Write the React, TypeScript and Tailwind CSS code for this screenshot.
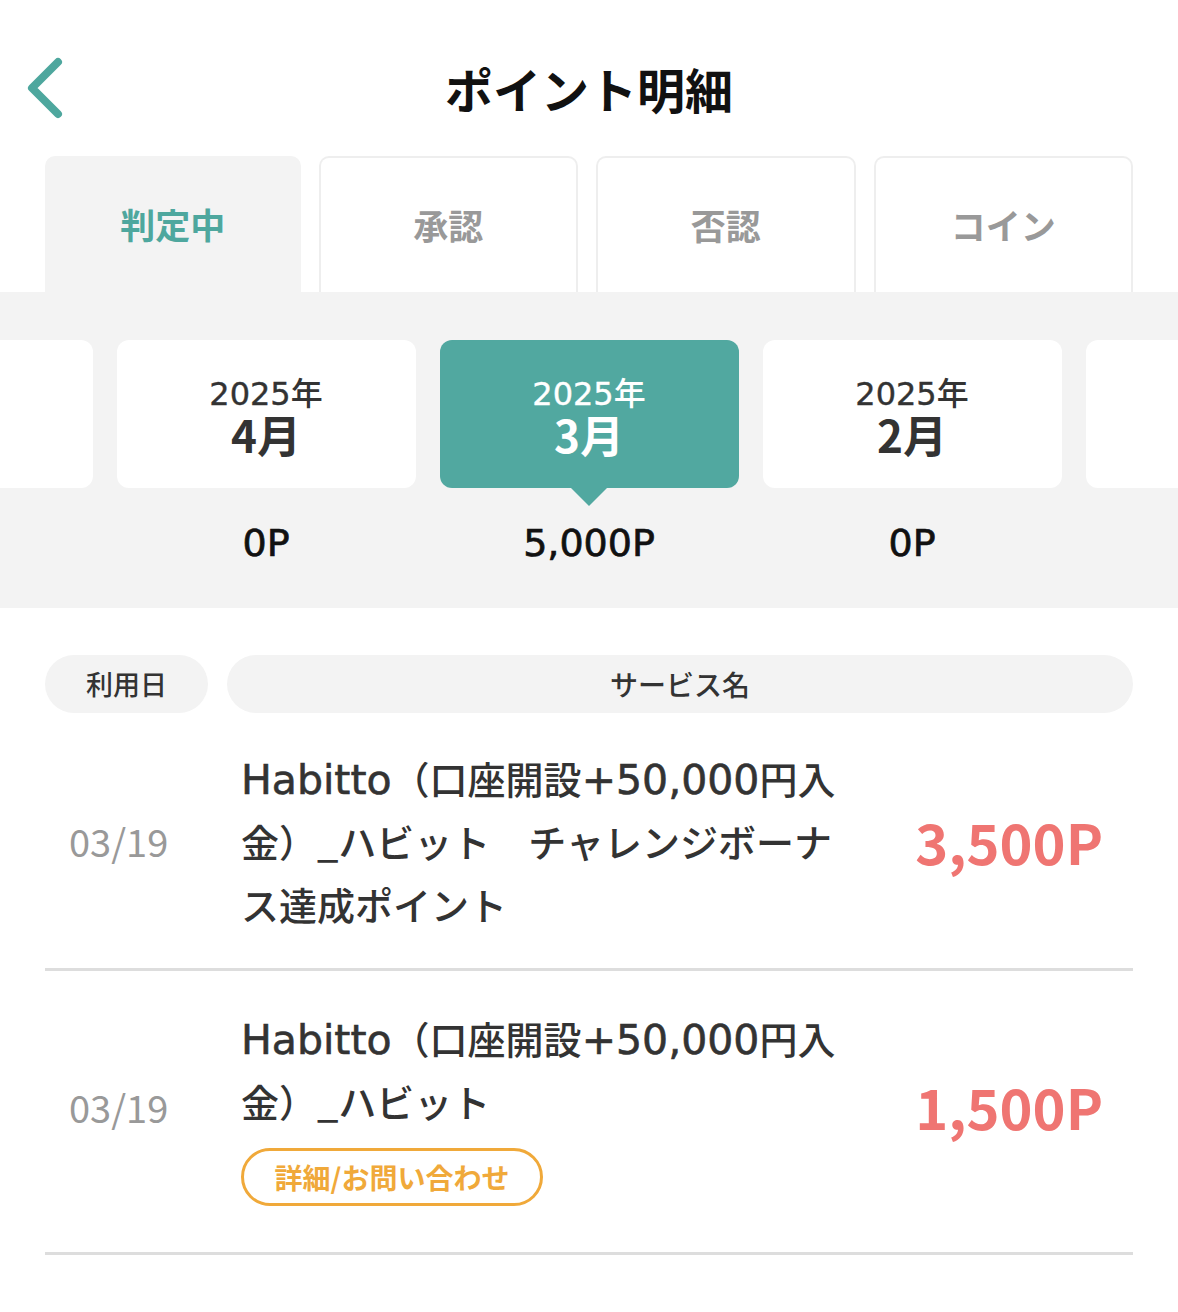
import React from "react";

const FONT = { fontFamily: '"Noto Sans CJK JP", "Noto Sans", sans-serif' };
const LATIN = { fontFamily: '"DejaVu Sans", "Noto Sans CJK JP", sans-serif' };

function L({ children }: { children: React.ReactNode }) {
  return (
    <span className="text-[41px] leading-none [-webkit-text-stroke:0.6px]" style={LATIN}>
      {children}
    </span>
  );
}

function MonthCard({ year, month, points, selected, blank }: { year?: string; month?: string; points?: string; selected?: boolean; blank?: boolean }) {
  return (
    <div className="flex w-[299px] shrink-0 flex-col items-center">
      <div
        className={
          "relative flex h-[148px] w-full flex-col items-center justify-center rounded-[12px] " +
          (selected ? "bg-[#51a8a0] text-white" : "bg-white text-[#333333]")
        }
      >
        {!blank && (
          <>
            <div className="text-[32px] leading-[36px] [-webkit-text-stroke:0.4px]" style={LATIN}>
              {year}
              <span className="font-medium [-webkit-text-stroke:0px]" style={FONT}>年</span>
            </div>
            <div className="text-[44px] leading-[44px] font-bold">{month}</div>
          </>
        )}
        {selected && (
          <svg className="absolute left-1/2 top-full -translate-x-1/2" width="36" height="18" viewBox="0 0 36 18">
            <polygon points="0,0 36,0 18,18" fill="#51a8a0" />
          </svg>
        )}
      </div>
      <div className="mt-[30px] h-[50px] text-[38px] leading-[50px] text-[#111111] [-webkit-text-stroke:0.7px]" style={LATIN}>
        {points}
      </div>
    </div>
  );
}

function Tab({ label, active }: { label: string; active?: boolean }) {
  return (
    <div
      className={
        "flex h-[136px] flex-1 items-center justify-center rounded-t-[10px] text-[35px] font-bold " +
        (active
          ? "bg-[#f3f3f3] text-[#4ea79e]"
          : "border-2 border-b-0 border-[#eeeeee] bg-white text-[#999999]")
      }
    >
      {label}
    </div>
  );
}

export default function App() {
  return (
    <div className="min-h-[1312px] w-[1178px] overflow-hidden bg-white" style={FONT}>
      {/* header */}
      <header className="mt-[28px] grid h-[120px] grid-cols-[1fr_auto_1fr] items-center">
        <div className="pl-[24px]">
          <svg width="44" height="64" viewBox="0 0 44 64">
            <polyline points="34,6 8,32 34,58" fill="none" stroke="#4ea79e" strokeWidth="8" strokeLinecap="round" strokeLinejoin="round" />
          </svg>
        </div>
        <h1 className="text-[48px] font-bold text-[#111111]">ポイント明細</h1>
        <div />
      </header>

      {/* tabs */}
      <div className="mt-[8px] flex gap-[18px] px-[45px]">
        <Tab label="判定中" active />
        <Tab label="承認" />
        <Tab label="否認" />
        <Tab label="コイン" />
      </div>

      {/* months */}
      <section className="flex justify-center gap-[24px] overflow-hidden bg-[#f3f3f3] pt-[48px] pb-[40px]">
        <MonthCard blank />
        <MonthCard year="2025" month="4月" points="0P" />
        <MonthCard year="2025" month="3月" points="5,000P" selected />
        <MonthCard year="2025" month="2月" points="0P" />
        <MonthCard blank />
      </section>

      {/* list header */}
      <div className="mt-[47px] flex gap-[19px] px-[45px]">
        <div className="flex h-[58px] w-[163px] items-center justify-center rounded-full bg-[#f3f3f3] text-[27px] font-medium text-[#333333]">
          利用日
        </div>
        <div className="flex h-[58px] flex-1 items-center justify-center rounded-full bg-[#f3f3f3] text-[28px] font-medium text-[#333333]">
          サービス名
        </div>
      </div>

      {/* rows */}
      <div className="mx-[45px]">
        <div className="flex items-center border-b-[3px] border-[#dddddd] pt-[33px] pb-[33px]">
          <div className="w-[196px] shrink-0 pl-[24px] text-[38px] text-[#999999]">03/19</div>
          <div className="w-[640px] shrink-0 text-[38px] leading-[63px] font-medium text-[#333333] whitespace-nowrap">
            <L>Habitto</L>（口座開設<L>+50,000</L>円入
            <br />
            金）_ハビット　チャレンジボーナ
            <br />
            ス達成ポイント
          </div>
          <div className="flex-1 pr-[30px] text-right text-[56px] font-bold text-[#ef7572]">3,500P</div>
        </div>

        <div className="flex items-center border-b-[3px] border-[#dddddd] pt-[35px] pb-[46px]">
          <div className="w-[196px] shrink-0 pl-[24px] text-[38px] text-[#999999]">03/19</div>
          <div className="w-[640px] shrink-0">
            <div className="text-[38px] leading-[63px] font-medium text-[#333333] whitespace-nowrap">
              <L>Habitto</L>（口座開設<L>+50,000</L>円入
              <br />
              金）_ハビット
            </div>
            <div className="mt-[16px] flex h-[58px] w-[302px] items-center justify-center rounded-full border-[3px] border-[#f0a93a] text-[28px] font-bold text-[#f0a93a]">
              詳細/お問い合わせ
            </div>
          </div>
          <div className="flex-1 pr-[30px] text-right text-[56px] font-bold text-[#ef7572]">1,500P</div>
        </div>
      </div>
    </div>
  );
}
